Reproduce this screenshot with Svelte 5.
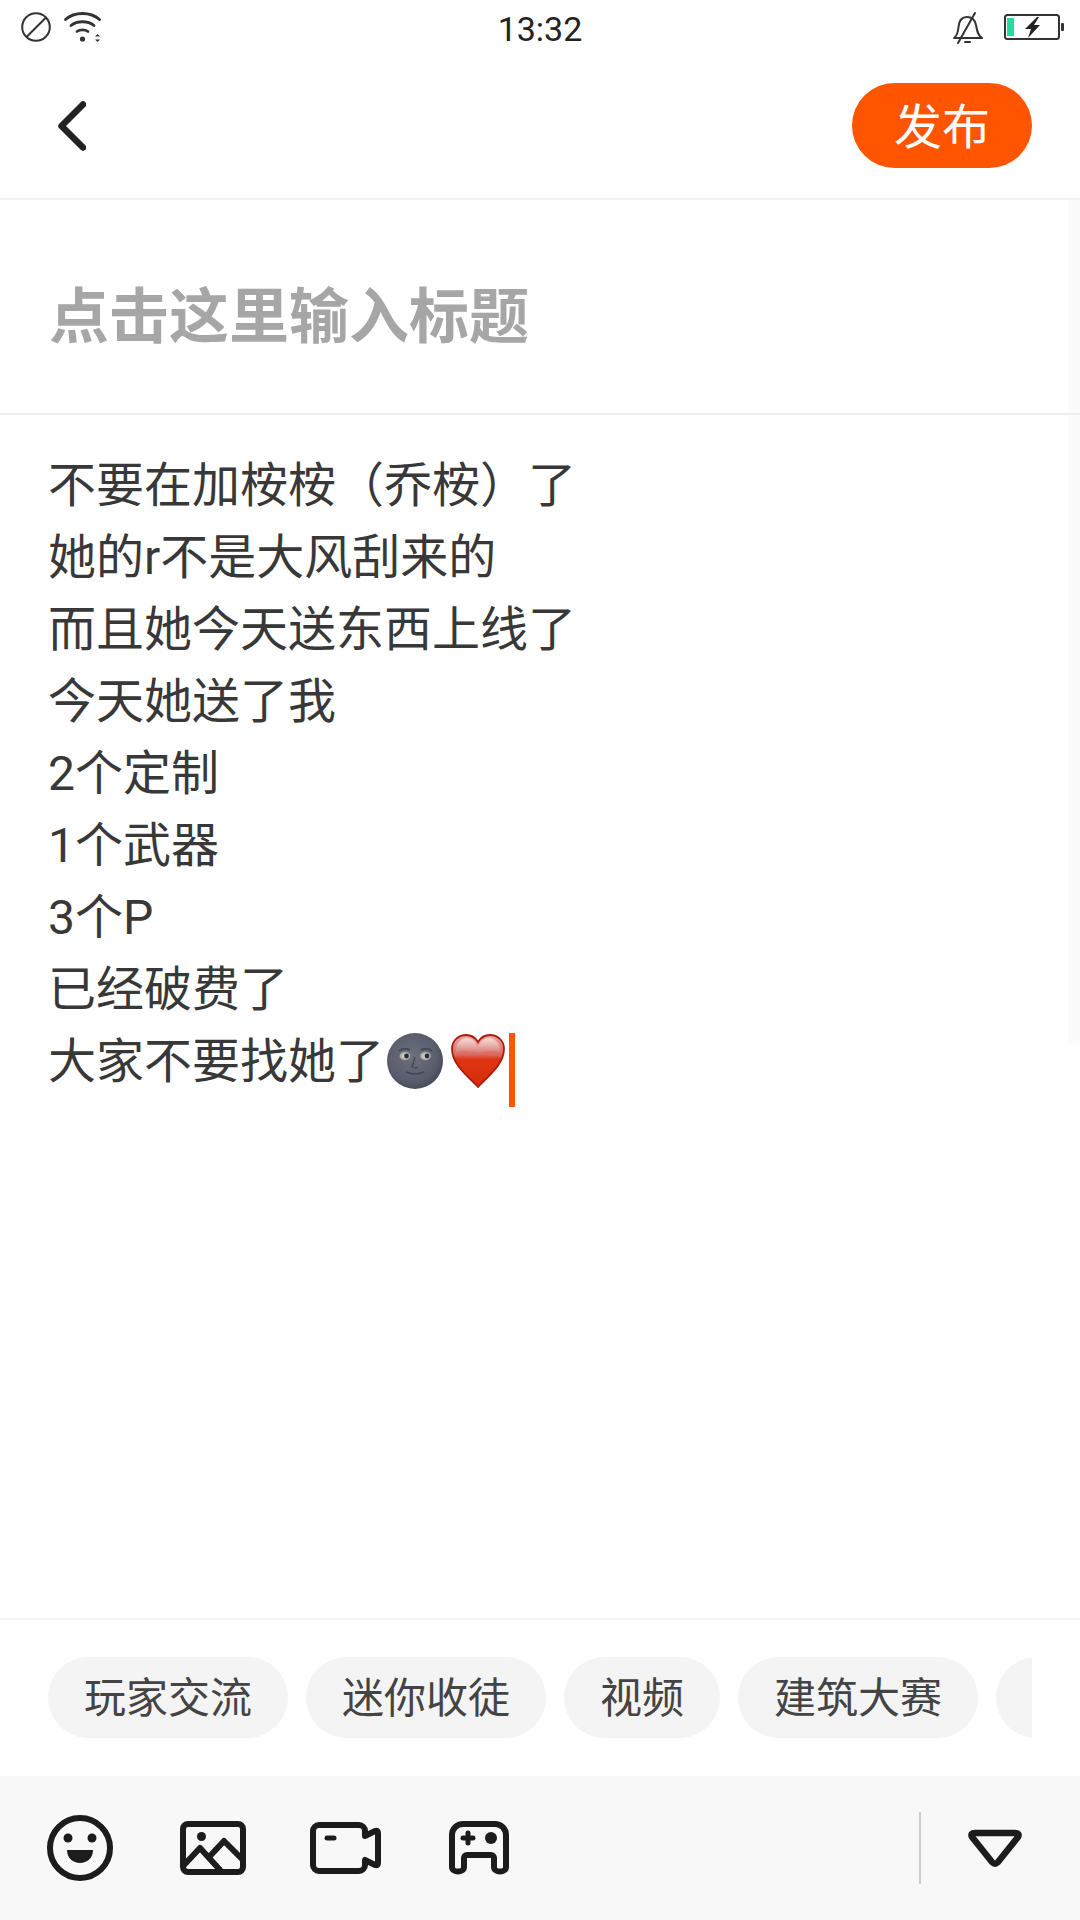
<script>
  const lines = ['不要在加桉桉（乔桉）了','她的r不是大风刮来的','而且她今天送东西上线了','今天她送了我','2个定制','1个武器','3个P','已经破费了'];
  const tags = ['玩家交流','迷你收徒','视频','建筑大赛'];
</script>

<div class="page">
  <div class="status">
    <div class="st-left">
      <svg width="30" height="30" viewBox="0 0 30 30" fill="none" stroke="#333" stroke-width="2"><circle cx="15" cy="15" r="13.8"/><path d="M5.500 25 25 5.500"/></svg>
      <svg width="38" height="31" viewBox="0 0 38 31" fill="none" stroke="#333" stroke-width="2.800" stroke-linecap="round">
        <path d="M1.500 7.500C10.500 -0.500 26.500 -0.500 35.500 7.500"/><path d="M7 13.500C13 8.500 24 8.500 30 13.500"/><path d="M13 19.500C16 17.200 21 17.200 24 19.500"/>
        <circle cx="18.500" cy="27" r="2.600" fill="#333" stroke="none"/><path d="M31 24.500l2.600-2.400 2.600 2.400z M31 27.500l2.600 2.400 2.600-2.400z" fill="#333" stroke="none"/>
      </svg>
    </div>
    <div class="time">13:32</div>
    <div class="st-right">
      <svg width="30" height="32" viewBox="0 0 30 32" fill="none" stroke="#333" stroke-width="2" stroke-linecap="round" stroke-linejoin="round">
        <path d="M1 26c3-2 4-6 4.500-11C6 9 9 5 14 5s8 3 9 8c1 6 2 11 6 13z"/><path d="M22 1 5 31" stroke-width="2"/><path d="M12 30h5"/>
      </svg>
      <svg class="batt" width="60" height="26" viewBox="0 0 60 26">
        <rect x="1" y="1" width="54" height="24" rx="2.500" fill="#fff" stroke="#333" stroke-width="2"/>
        <rect x="3" y="4" width="7" height="18" fill="#25dba1"/>
        <path d="M33 3 21 15h6l-3 9 12-13h-6l5-8z" fill="#222"/>
        <rect x="57" y="9" width="3" height="8" rx="1" fill="#333"/>
      </svg>
    </div>
  </div>

  <header class="head">
    <svg width="28" height="50" viewBox="0 0 28 50" fill="none" stroke="#222" stroke-width="6.500" stroke-linecap="round" stroke-linejoin="round"><path d="M25 3.500 3.500 25 25 46.500"/></svg>
    <button class="pub">发布</button>
  </header>

  <div class="title">点击这里输入标题</div>

  <main class="body">
    {#each lines as l}<div class="line">{l}</div>{/each}
    <div class="line last">大家不要找她了<svg class="moon" width="56" height="56" viewBox="0 0 56 56">
        <defs>
          <radialGradient id="mg" cx=".45" cy=".42" r=".62"><stop offset="0" stop-color="#6d717f"/><stop offset=".72" stop-color="#585c6b"/><stop offset="1" stop-color="#434756"/></radialGradient>
          <radialGradient id="eye" cx=".5" cy=".5" r=".5"><stop offset="0" stop-color="#efe8d2"/><stop offset="1" stop-color="#a09e98"/></radialGradient>
        </defs>
        <circle cx="28" cy="28" r="28" fill="url(#mg)"/>
        <ellipse cx="18" cy="23" rx="5.500" ry="4.200" fill="url(#eye)"/><ellipse cx="38.500" cy="23" rx="5.500" ry="4.200" fill="url(#eye)"/>
        <circle cx="19.500" cy="23" r="2.400" fill="#2b2d38"/><circle cx="40" cy="23" r="2.400" fill="#2b2d38"/>
        <path d="M12 18q5-4 11-1M34 17q6-3 11 1" stroke="#3f4352" stroke-width="1.600" fill="none"/>
        <path d="M28 24q-2 7-3 10 3 2 6 0" stroke="#454957" stroke-width="1.500" fill="none"/>
        <path d="M19 39q9 4 18 0" stroke="#3f4352" stroke-width="1.600" fill="none"/>
      </svg><svg class="heart" width="54" height="56" viewBox="0 0 54 56">
        <defs>
          <linearGradient id="hg" x1="0" y1="0" x2="0" y2="1"><stop offset="0" stop-color="#e7a9a2"/><stop offset=".38" stop-color="#d96a62"/><stop offset=".46" stop-color="#dd3514"/><stop offset="1" stop-color="#d92c08"/></linearGradient>
          <linearGradient id="hl" x1="0" y1="0" x2="0" y2="1"><stop offset="0" stop-color="#fff" stop-opacity=".6"/><stop offset="1" stop-color="#fff" stop-opacity=".05"/></linearGradient>
        </defs>
        <path d="M27 54C18 44 1 32 1 16 1 7 8 2 15 2c5 0 9 2 12 7 3-5 7-7 12-7 7 0 14 5 14 14 0 16-17 28-26 38z" fill="url(#hg)" stroke="#a81c0c" stroke-width="1.800"/>
        <path d="M5 20C4 11 10 5 16 5c5 0 8 3 11 8 3-5 6-8 11-8 6 0 12 6 11 15-8-4-14-2-22 0-8-2-14-4-22 0z" fill="url(#hl)"/>
      </svg><span class="caret"></span></div>
    <div class="strip"></div>
  </main>

  <section class="tags">
    <div class="tag-row">
      {#each tags as t}<span class="chip">{t}</span>{/each}
      <span class="chip peek"></span>
    </div>
  </section>

  <footer class="tools">
    <svg width="72" height="72" viewBox="0 0 72 72" fill="none" stroke="#1c1c1c" stroke-width="6">
      <circle cx="36" cy="36" r="30"/><circle cx="24" cy="26" r="4.500" fill="#1c1c1c" stroke="none"/><circle cx="48" cy="26" r="4.500" fill="#1c1c1c" stroke="none"/>
      <path d="M23 38h26c0 8-6 13-13 13s-13-5-13-13z" fill="#1c1c1c" stroke="none"/>
    </svg>
    <svg width="72" height="72" viewBox="0 0 72 72" fill="none" stroke="#1c1c1c" stroke-width="6" stroke-linejoin="round" stroke-linecap="round">
      <rect x="6" y="12" width="60" height="48" rx="5"/>
      <circle cx="24.500" cy="24.500" r="4.500" fill="#1c1c1c" stroke="none"/>
      <path d="M7 53 23 36l20 22M33 44l14-15 18 18" />
    </svg>
    <svg width="72" height="72" viewBox="0 0 72 72" fill="none" stroke="#1c1c1c" stroke-width="6" stroke-linejoin="round" stroke-linecap="round">
      <path d="M9 13h40a6 6 0 0 1 6 6v5l10-5q3-1 3 2v30q0 3-3 2l-10-5v5a6 6 0 0 1-6 6H9a6 6 0 0 1-6-6V19a6 6 0 0 1 6-6z"/>
      <path d="M17 26h7" stroke-width="5"/>
    </svg>
    <svg width="72" height="72" viewBox="0 0 72 72" fill="none" stroke="#1c1c1c" stroke-width="6" stroke-linejoin="round" stroke-linecap="round">
      <path d="M20 12h32a11 11 0 0 1 11 11v32c0 6-12 6-12 0v-9a3 3 0 0 0-3-3H24a3 3 0 0 0-3 3v9c0 6-12 6-12 0V23a11 11 0 0 1 11-11z"/>
      <path d="M20 26h10M25 21v10" stroke-width="5"/><circle cx="48" cy="26" r="6" fill="#1c1c1c" stroke="none"/>
    </svg>
    <span class="divider"></span>
    <svg class="tri" width="58" height="42" viewBox="0 0 58 42" fill="none" stroke="#1c1c1c" stroke-width="6.500" stroke-linejoin="round">
      <path d="M9 6h40q5 0 3 4L32 35q-3 3-6 0L6 10Q4 6 9 6z"/>
    </svg>
  </footer>
</div>

<style>
  :global(body) { margin: 0; background: #fff; }
  .page {
    width: 1080px; height: 1920px; display: flex; flex-direction: column; overflow: hidden; isolation: isolate;
    font-family: Roboto, "Noto Sans CJK SC", sans-serif; color: #333; background: #fff;
  }
  .status { height: 60px; display: grid; grid-template-columns: 1fr auto 1fr; padding: 0 16px; box-sizing: border-box; align-items: start; }
  .st-left { display: flex; gap: 13px; padding: 12px 0 0 5px; }
  .st-right { display: flex; justify-content: flex-end; gap: 21px; padding-top: 12px; }
  .batt { margin-top: 2px; }
  .time { font-size: 34px; line-height: 58px; color: #222; }
  .head { height: 138px; display: flex; align-items: center; justify-content: space-between; padding: 0 48px 0 58px; border-bottom: 2px solid #f0f0f0; }
  .head svg { margin-top: -7px; }
  .pub { width: 180px; height: 85px; border: 0; padding: 0 0 5px; border-radius: 43px; background: #ff5500; color: #fff; font: inherit; font-size: 48px; margin-top: -8px; }
  .title { height: 215px; box-sizing: border-box; padding: 74px 0 0 49px; font-size: 60px; line-height: 88px; font-weight: 700; color: #a6a6a6; border-bottom: 2px solid #eee; }
  .body { flex: 1; position: relative; padding: 35px 0 0 48px; font-size: 48px; line-height: 72px; color: #383838; }
  .line { height: 72px; white-space: nowrap; }
  .last { display: flex; align-items: flex-start; }
  .moon { margin: 7px 0 0 3px; }
  .heart { margin: 7px 0 0 8px; }
  .caret { width: 6px; height: 74px; background: #ff5500; margin: 7px 0 0 4px; }
  .strip { position: absolute; right: 0; top: -215px; width: 12px; height: 845px; background: #fbfbfb; z-index: -1; }
  .tags { border-top: 2px solid #f4f4f4; padding: 37px 48px 0; box-sizing: border-box; height: 158px; }
  .tag-row { display: flex; gap: 18px; overflow: hidden; }
  .chip { flex: none; height: 81px; line-height: 84px; padding: 0 36px; border-radius: 41px; background: #f4f4f4; font-size: 42px; color: #444; }
  .peek { width: 120px; padding: 0; }
  .tools { height: 144px; background: #f8f8f8; display: flex; align-items: center; gap: 61px; padding: 0 56px 0 44px; box-sizing: border-box; }
  .divider { margin-left: auto; width: 2px; height: 72px; background: #ccc; margin-right: -16px; }
</style>
